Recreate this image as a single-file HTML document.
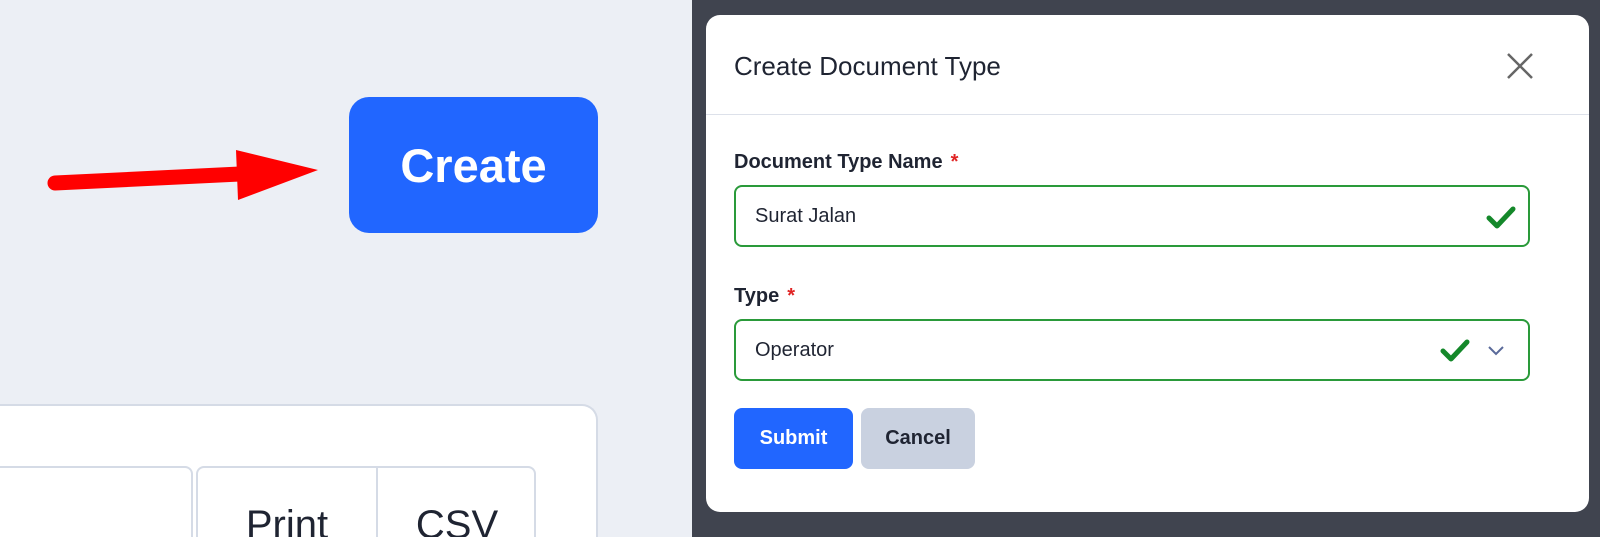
<!DOCTYPE html>
<html style="overflow:hidden;height:537px"><head><style>
*{box-sizing:border-box}
body{margin:0;width:1600px;height:537px;overflow:hidden;position:relative;font-family:"Liberation Sans",sans-serif;background:#40444f}
.left{position:absolute;left:0;top:0;width:692px;height:537px;background:#eceff5;overflow:hidden}
.create{position:absolute;left:349px;top:97px;width:249px;height:136px;background:#2166ff;border-radius:20px;color:#fff;font-weight:bold;font-size:47px;display:flex;align-items:center;justify-content:center}
.card{position:absolute;left:-20px;top:404px;width:618px;height:133px;background:#fff;border:2px solid #d5dbe6;border-bottom:none;border-radius:16px 16px 0 0}
.b{position:absolute;top:466px;height:71px;border:2px solid #d5dbe6;border-bottom:none;border-radius:8px 8px 0 0;background:#fff;font-size:40px;color:#1f2432;text-align:center;line-height:114px;overflow:hidden}
.modal{position:absolute;left:706px;top:15px;width:883px;height:497px;background:#fff;border-radius:14px}
.title{position:absolute;left:28px;top:36px;font-size:26px;color:#1f2432}
.hr{position:absolute;left:0;right:0;top:99px;height:1px;background:#dde1ea}
.lbl{position:absolute;left:28px;font-size:20px;font-weight:bold;color:#1f2432}
.lbl span{color:#e02424;margin-left:8px}
.inp{position:absolute;left:28px;width:796px;height:62px;border:2px solid #2a9a3a;border-radius:8px;font-size:20px;color:#1f2432;line-height:58px;padding-left:19px}
.btn{position:absolute;top:393px;height:61px;border-radius:8px;font-size:20px;font-weight:bold;line-height:61px;text-align:center}
</style></head><body>
<div class="left">
<svg style="position:absolute;left:0;top:0" width="692" height="537"><path d="M55 183 L240 174" stroke="#f00" stroke-width="15" stroke-linecap="round"/><path d="M236 150 L318 170 L238 200 Z" fill="#f00"/></svg>
<div class="create">Create</div>
<div class="card"></div>
<div class="b" style="left:-20px;width:213px"></div>
<div class="b" style="left:196px;width:340px"><span style="position:absolute;left:0;width:178px">Print</span><span style="position:absolute;left:178px;top:0;bottom:0;width:2px;background:#d5dbe6"></span><span style="position:absolute;left:180px;width:158px">CSV</span></div>
</div>
<div class="modal">
<div class="title">Create Document Type</div>
<svg style="position:absolute;left:800px;top:37px" width="28" height="28"><path d="M2 2L26 26M26 2L2 26" stroke="#666" stroke-width="2.5"/></svg>
<div class="hr"></div>
<div class="lbl" style="top:136px">Document Type Name<span>*</span></div>
<div class="inp" style="top:170px">Surat Jalan</div>
<svg style="position:absolute;left:780px;top:190px" width="30" height="26"><path d="M3 13L11 21L27 4" stroke="#14882a" stroke-width="5" fill="none" stroke-linecap="round" stroke-linejoin="round"/></svg>
<div class="lbl" style="top:270px">Type<span>*</span></div>
<div class="inp" style="top:304px">Operator</div>
<svg style="position:absolute;left:734px;top:323px" width="30" height="26"><path d="M3 13L11 21L27 4" stroke="#14882a" stroke-width="5" fill="none" stroke-linecap="round" stroke-linejoin="round"/></svg>
<svg style="position:absolute;left:781px;top:330px" width="18" height="12"><path d="M2 2L9 9L16 2" stroke="#5a6a9a" stroke-width="2" fill="none"/></svg>
<div class="btn" style="left:28px;width:119px;background:#2166ff;color:#fff">Submit</div>
<div class="btn" style="left:155px;width:114px;background:#c9d1e0;color:#1f2432">Cancel</div>
</div>
</body></html>
